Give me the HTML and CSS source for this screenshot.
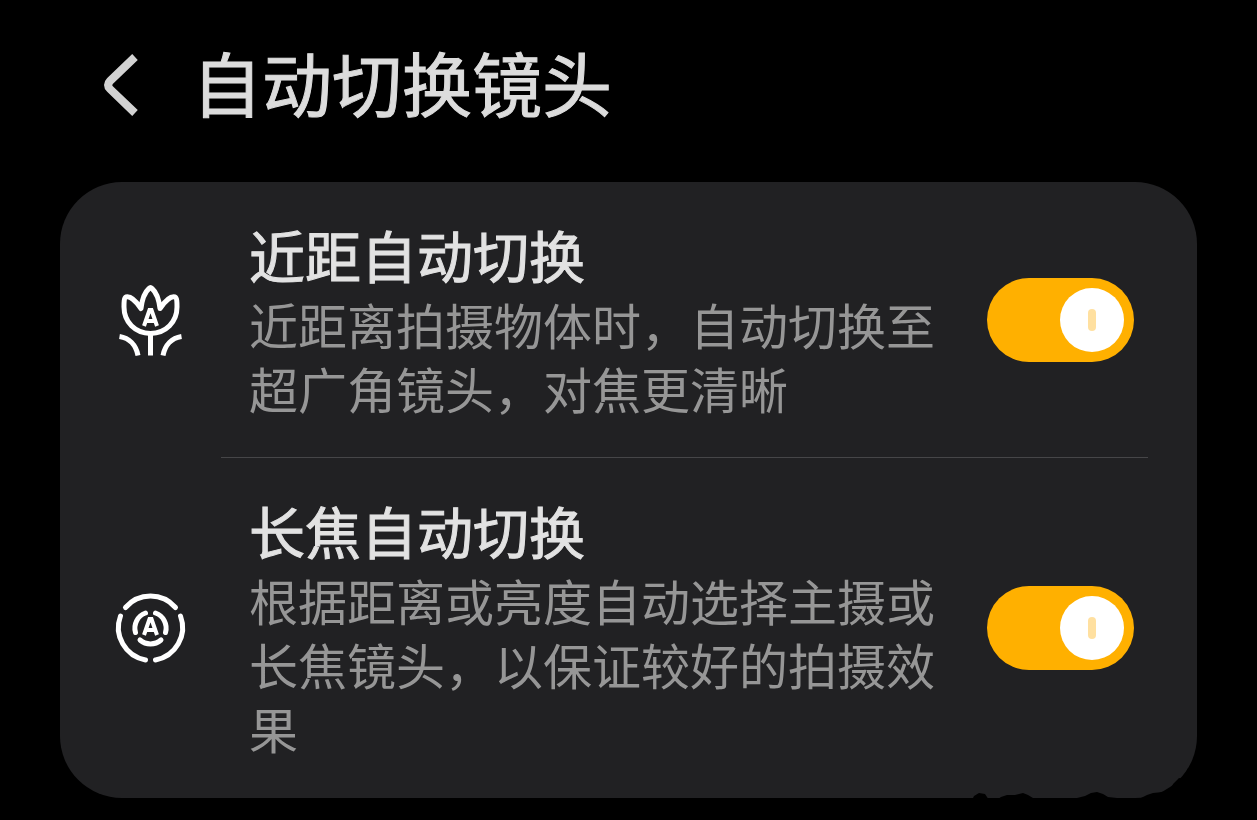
FILE: index.html
```html
<!DOCTYPE html>
<html lang="zh-CN">
<head>
<meta charset="utf-8">
<meta name="viewport" content="width=device-width, initial-scale=1">
<title>自动切换镜头</title>
<link rel="stylesheet" href="styles.css">
</head>
<body>
<header class="header">
  <button class="back" type="button" aria-label="返回">
    <svg class="back-icon" viewBox="0 0 40 68" fill="none" stroke="#d2d2d2" stroke-width="8" aria-hidden="true"><path d="M35 5 10 29Q6 33 10 37L35 61"/></svg>
  </button>
  <h1 class="title">自动切换镜头</h1>
</header>
<main class="card">
  <section class="row">
    <svg class="icon" viewBox="0 0 80 80" fill="none" stroke="#fff" stroke-width="5" stroke-linejoin="round" aria-hidden="true">
      <path d="M40.500 53.500C25 53 14 42 14 27C14 22 14 18 16 17C20 16 26 21 31 28.500C32 20 35 12 39 8.500Q40.500 7 42 8.500C46 12 49 20 50 28.500C55 21 61 16 65 17C67 18 67 22 67 27C67 42 56 53 40.500 53.500V75.500"/>
      <path d="M9.500 56.500C19 58 26 65 28 75.500M71.500 56.500C62 58 55 65 53 75.500"/>
      <path stroke-width="4" stroke-linejoin="miter" d="M34 46 39.500 30H41.500L47 46M36 41H45"/>
    </svg>
    <div class="body">
      <h2 class="name" id="near-name">近距自动切换</h2>
      <p class="desc" id="near-desc">近距离拍摄物体时，自动切换至超广角镜头，对焦更清晰</p>
    </div>
    <input class="switch" type="checkbox" role="switch" checked aria-labelledby="near-name" aria-describedby="near-desc">
  </section>
  <hr class="divider">
  <section class="row">
    <svg class="icon" viewBox="0 0 80 80" fill="none" stroke="#fff" stroke-width="5" stroke-linecap="round" aria-hidden="true">
      <path d="M15.500 19.500A33 33 0 0 1 65.500 19.500M70.500 28A33 33 0 0 1 45.500 72M35.500 72A33 33 0 0 1 10.500 28"/>
      <path d="M35.500 25A16 16 0 0 0 25.500 44.500M45.500 25A16 16 0 0 1 55.500 44.500M30 52A16 16 0 0 0 51 52"/>
      <path stroke-width="4" stroke-linecap="butt" d="M34 47 39.500 31H41.500L47 47M36 42H45"/>
    </svg>
    <div class="body">
      <h2 class="name" id="tele-name">长焦自动切换</h2>
      <p class="desc" id="tele-desc">根据距离或亮度自动选择主摄或长焦镜头，以保证较好的拍摄效果</p>
    </div>
    <input class="switch" type="checkbox" role="switch" checked aria-labelledby="tele-name" aria-describedby="tele-desc">
  </section>
  <svg class="edge" viewBox="0 0 240 62" aria-hidden="true">
    <path fill="#000" d="M14 62 17 56 22 53 28 54 32 60 38 61 44 57 50 55 58 55 66 53 71 55 76 58 84 59 92 58 100 60 106 58 120 58 128 56 134 53 140 52 146 54 151 57 160 58 168 60 174 58 182 59 190 55 196 53 206 52 213 54 216 44 222 38 226 39 231 28H240V62Z"/>
  </svg>
</main>
</body>
</html>
```
FILE: styles.css
```css
* {
  box-sizing: border-box;
}

body {
  margin: 0;
  padding: 34px 60px 22px;
  background: #000;
  color: #e2e2e2;
  font-family: "Noto Sans CJK SC", "Noto Sans", sans-serif;
}

.header {
  display: flex;
  align-items: flex-start;
  gap: 52px;
  margin-bottom: 52px;
  padding-left: 40px;
}

.back {
  display: flex;
  padding: 18px 0 0;
  border: 0;
  background: none;
}

.back-icon {
  width: 40px;
  height: 68px;
}

.title,
.name,
.desc {
  margin: 0;
  font-weight: 400;
}

.title,
.name {
  -webkit-text-stroke: 1px currentColor;
}

.title {
  color: #dcdcdc;
  font-size: 70px;
  line-height: 96px;
}

.card {
  position: relative;
  border-radius: 62px;
  background: #212123;
}

.row {
  display: flex;
  align-items: center;
  padding: 0 63px 0 50px;
}

.icon {
  flex: none;
  width: 80px;
  height: 80px;
  margin-right: 59px;
}

.body {
  flex: 1;
  padding: 34px 0 38px;
}

.name {
  font-size: 56px;
  line-height: 76px;
}

.desc {
  color: #969696;
  font-size: 49px;
  line-height: 64px;
}

.switch {
  position: relative;
  display: flex;
  flex: none;
  align-items: center;
  justify-content: flex-end;
  appearance: none;
  width: 147px;
  height: 84px;
  margin: 0 0 0 48px;
  padding: 0 10px;
  border-radius: 42px;
  background: #ffb000;
}

.switch::before {
  content: "";
  width: 64px;
  height: 64px;
  border-radius: 50%;
  background: #fff;
}

.switch::after {
  content: "";
  position: absolute;
  right: 38px;
  width: 8px;
  height: 22px;
  border-radius: 4px;
  background: #ffe0a0;
}

.switch:not(:checked) {
  justify-content: flex-start;
  background: #58585a;
}

.switch:not(:checked)::after {
  display: none;
}

.divider {
  height: 1px;
  margin: -1px 49px 0 161px;
  border: 0;
  background: #464648;
}

.edge {
  position: absolute;
  right: 0;
  bottom: -4px;
  width: 240px;
  height: 62px;
}
```
